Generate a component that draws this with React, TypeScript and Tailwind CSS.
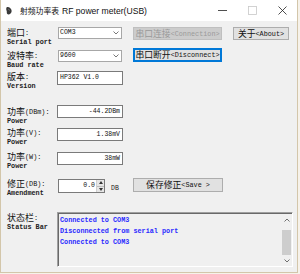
import React from "react";

type Seg = [string, "c" | "l"];

function Zh({ segs }: { segs: Seg[] }) {
  return (
    <span className="inline-flex items-center whitespace-nowrap">
      {segs.map(([t, k], i) =>
        k === "c" ? (
          <span key={i} className="font-['Noto_Sans_CJK_SC',sans-serif] text-[9px] leading-[10px]">
            {t}
          </span>
        ) : (
          <span key={i} className="font-['Liberation_Mono',monospace] text-[6.8px] leading-[10px]">
            {t}
          </span>
        )
      )}
    </span>
  );
}

function Label({ zh, en, mt = "mt-[1px]" }: { zh: Seg[]; en: string; mt?: string }) {
  return (
    <div className={`w-[50px] flex flex-col text-[#111] ${mt}`}>
      <div className="h-[10px] flex items-center">
        <Zh segs={zh} />
      </div>
      <div className="h-[8px] leading-[8px] font-['Liberation_Mono',monospace] font-bold text-[6.8px] whitespace-nowrap text-[#222]">
        {en}
      </div>
    </div>
  );
}

function Combo({ value }: { value: string }) {
  return (
    <div className="ml-[1px] w-[64px] h-[12px] bg-white border border-[#a7a7a7] flex items-center justify-between pl-[1px] pr-[2px]">
      <span className="font-['Liberation_Mono',monospace] text-[6.5px] leading-[10px] text-[#111]">{value}</span>
      <svg width="6" height="4" viewBox="0 0 6 4">
        <path d="M0.5 0.5 L3 3 L5.5 0.5" fill="none" stroke="#555" strokeWidth="0.8" />
      </svg>
    </div>
  );
}

function TextBox({ value, right = false, h = "h-[13px]" }: { value: string; right?: boolean; h?: string }) {
  return (
    <div
      className={`w-[66px] ${h} bg-white border border-[#7a7a7a] flex items-center px-[2px] ${
        right ? "justify-end" : "justify-start"
      }`}
    >
      <span className="font-['Liberation_Mono',monospace] text-[6.5px] leading-[10px] text-[#111]">{value}</span>
    </div>
  );
}

function Btn({
  zh,
  en,
  w,
  h = "h-[13px]",
  variant = "normal",
  extra = "",
}: {
  zh: string;
  en: string;
  w: string;
  h?: string;
  variant?: "normal" | "disabled" | "focus";
  extra?: string;
}) {
  const cls =
    variant === "disabled"
      ? "bg-[#cccccc] border border-[#bfbfbf] text-[#9a9a9a]"
      : variant === "focus"
      ? "bg-[#e1e1e1] border-2 border-[#0078d7] text-[#111]"
      : "bg-[#e1e1e1] border border-[#adadad] text-[#111]";
  return (
    <div className={`${w} ${h} ${cls} shrink-0 flex items-center justify-center ${extra}`}>
      <span className="font-['Noto_Sans_CJK_SC',sans-serif] text-[8.8px] leading-[10px]">{zh}</span>
      <span className="font-['Liberation_Mono',monospace] text-[6.8px] leading-[10px]">{en}</span>
    </div>
  );
}

export default function App() {
  return (
    <div className="w-[300px] h-[274px] bg-[#f6f2ea] overflow-hidden">
      <div className="w-[298px] h-[273px] bg-[#f0f0f0] border-r border-b border-l border-[#d3c6aa] flex flex-col">
        {/* Title bar */}
        <div className="h-[21px] bg-white flex items-center">
          <svg width="8" height="9" viewBox="0 0 8 9" className="ml-[4px]">
            <path d="M2 1 C4 0.5 6 2 6.5 4 C7 6 6 8 4 8.5 C2.5 8.8 1.5 7.5 1.8 6 C2 5 1 4 1.2 2.8 C1.3 1.8 1.6 1.2 2 1 Z" fill="#3a3a3a" />
            <path d="M3 3 L5 4.5" stroke="#888" strokeWidth="0.6" />
          </svg>
          <div className="ml-[7px] flex items-center whitespace-nowrap text-[#111]">
            <span className="font-['Noto_Sans_CJK_SC',sans-serif] text-[7.8px] leading-[10px]">射频功率表</span>
            <span className="font-['Liberation_Sans',sans-serif] text-[8.6px] leading-[10px] ml-[3px]">
              RF power meter(USB)
            </span>
          </div>
          <div className="ml-auto flex items-center">
            <div className="w-[30px] h-[21px] flex items-center justify-center">
              <svg width="9" height="9" viewBox="0 0 9 9">
                <path d="M0 4.5 H9" stroke="#222" strokeWidth="0.8" />
              </svg>
            </div>
            <div className="w-[30px] h-[21px] flex items-center justify-center">
              <svg width="9" height="9" viewBox="0 0 9 9">
                <rect x="0.5" y="0.5" width="8" height="8" fill="none" stroke="#c8c8c8" strokeWidth="0.8" />
              </svg>
            </div>
            <div className="w-[30px] h-[21px] flex items-center justify-center">
              <svg width="9" height="9" viewBox="0 0 9 9">
                <path d="M0.5 0.5 L8.5 8.5 M8.5 0.5 L0.5 8.5" stroke="#222" strokeWidth="0.8" />
              </svg>
            </div>
          </div>
        </div>

        {/* Content */}
        <div className="flex flex-col pl-[6px] pt-[6px]">
          {/* Row 1 */}
          <div className="h-[23px] flex items-start">
            <Label zh={[["端口", "c"], [":", "l"]]} en="Serial port" />
            <Combo value="COM3" />
            <Btn zh="串口连接" en="<Connection>" w="w-[89px]" variant="disabled" extra="ml-[11px]" />
            <Btn zh="关于" en="<About>" w="w-[56px]" extra="ml-[11px]" />
          </div>
          {/* Row 2 */}
          <div className="h-[21px] flex items-start">
            <Label zh={[["波特率", "c"], [":", "l"]]} en="Baud rate" />
            <Combo value="9600" />
            <Btn zh="串口断开" en="<Disconnect>" w="w-[89px]" h="h-[14px]" variant="focus" extra="ml-[11px] -mt-[2px]" />
          </div>
          {/* Row 3 */}
          <div className="h-[34px] flex items-start">
            <Label zh={[["版本", "c"], [":", "l"]]} en="Version" />
            <TextBox value="HP362 V1.0" h="h-[14px]" />
          </div>
          {/* Row 4 */}
          <div className="h-[23px] flex items-start">
            <Label zh={[["功率", "c"], ["(DBm):", "l"]]} en="Power" mt="mt-[2px]" />
            <TextBox value="-44.2DBm" right />
          </div>
          {/* Row 5 */}
          <div className="h-[24px] flex items-start">
            <Label zh={[["功率", "c"], ["(V):", "l"]]} en="Power" mt="mt-[0px]" />
            <TextBox value="1.38mV" right />
          </div>
          {/* Row 6 */}
          <div className="h-[27px] flex items-start">
            <Label zh={[["功率", "c"], ["(W):", "l"]]} en="Power" mt="mt-[0px]" />
            <TextBox value="38mW" right />
          </div>
          {/* Row 7 */}
          <div className="h-[33px] flex items-start">
            <Label zh={[["修正", "c"], ["(DB):", "l"]]} en="Amendment" mt="mt-[0px]" />
            <div className="ml-[1px] w-[47px] h-[14px] shrink-0 bg-white border border-[#7a7a7a] flex items-stretch">
              <div className="flex-1 flex items-center justify-end pr-[1px]">
                <span className="font-['Liberation_Mono',monospace] text-[6.5px] leading-[10px] text-[#111]">0.0</span>
              </div>
              <div className="w-[8px] flex flex-col border-l border-[#d0d0d0]">
                <div className="flex-1 bg-[#e6e6e6] border-b border-[#bdbdbd] flex items-center justify-center">
                  <svg width="4" height="3" viewBox="0 0 4 3">
                    <path d="M0 3 L2 0 L4 3 Z" fill="#333" />
                  </svg>
                </div>
                <div className="flex-1 bg-[#e6e6e6] flex items-center justify-center">
                  <svg width="4" height="3" viewBox="0 0 4 3">
                    <path d="M0 0 L2 3 L4 0 Z" fill="#333" />
                  </svg>
                </div>
              </div>
            </div>
            <div className="w-[28px] shrink-0 pl-[6px] pt-[6px] font-['Liberation_Mono',monospace] text-[6.5px] leading-[8px] text-[#222]">
              DB
            </div>
            <Btn zh="保存修正" en="<Save >" w="w-[90px]" h="h-[14px]" extra="-mt-[1px]" />
          </div>
          {/* Status */}
          <div className="h-[55px] flex items-start">
            <Label zh={[["状态栏", "c"], [":", "l"]]} en="Status Bar" mt="mt-[1px]" />
            <div className="w-[236px] h-[55px] flex border-t border-l border-[#a0a0a0] border-r border-b border-r-white border-b-white">
              <div className="flex-1 flex border-t border-l border-[#696969]">
                <div className="flex-1 flex flex-col pt-[1px] pl-[1px] font-['Liberation_Mono',monospace] font-bold text-[6.8px] leading-[11px] text-[#2a2aff] whitespace-nowrap">
                  <div>Connected to COM3</div>
                  <div>Disconnected from serial port</div>
                  <div>Connected to COM3</div>
                </div>
                <div className="w-[11px] flex flex-col bg-[#f0f0f0]">
                  <div className="h-[11px] flex items-center justify-center">
                    <svg width="6" height="4" viewBox="0 0 6 4">
                      <path d="M0.5 3.5 L3 1 L5.5 3.5" fill="none" stroke="#606060" strokeWidth="0.9" />
                    </svg>
                  </div>
                  <div className="flex-1 flex flex-col px-[1px]">
                    <div className="mt-[5px] flex-1 bg-[#cdcdcd]" />
                  </div>
                  <div className="h-[11px] flex items-center justify-center">
                    <svg width="6" height="4" viewBox="0 0 6 4">
                      <path d="M0.5 0.5 L3 3 L5.5 0.5" fill="none" stroke="#606060" strokeWidth="0.9" />
                    </svg>
                  </div>
                </div>
              </div>
            </div>
          </div>
        </div>
      </div>
    </div>
  );
}
